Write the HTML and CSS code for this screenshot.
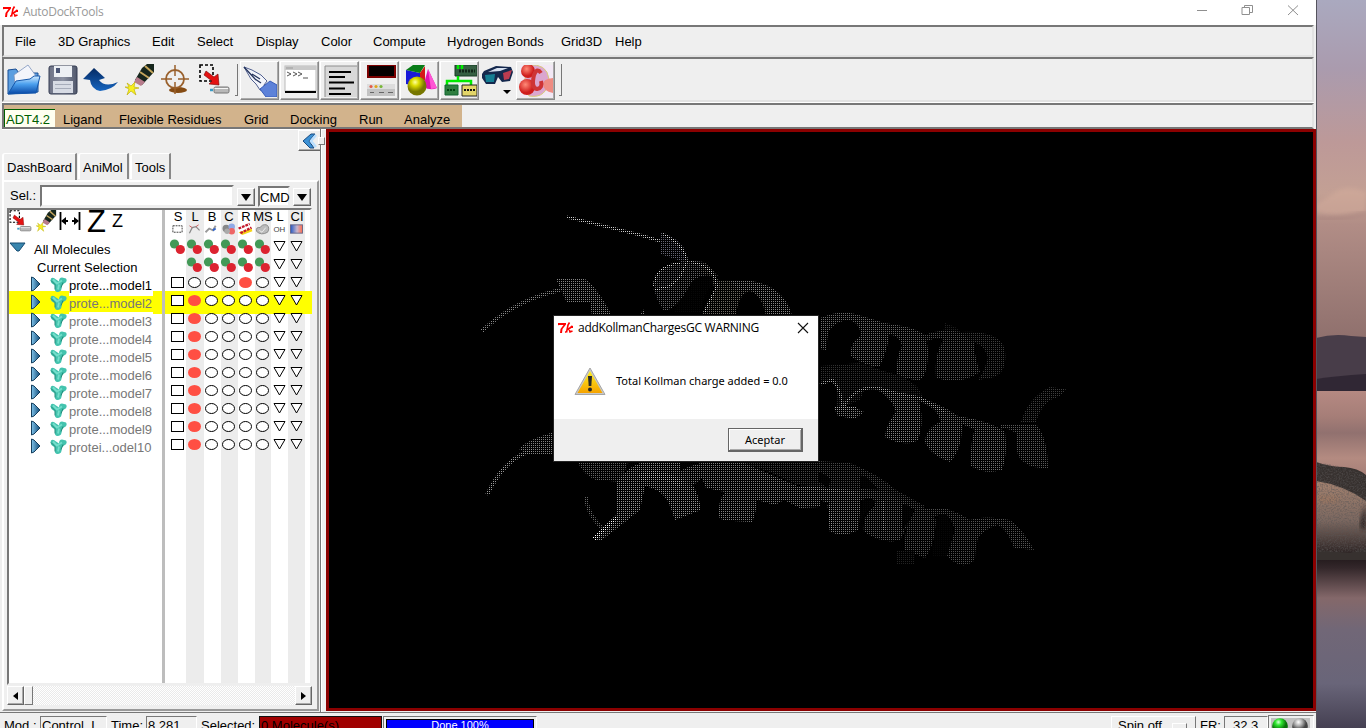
FILE: index.html
```html
<!DOCTYPE html>
<html lang="es">
<head>
<meta charset="utf-8">
<title>AutoDockTools</title>
<link rel="stylesheet" href="styles.css">
</head>
<body>
<svg class="defs" width="0" height="0">
  <defs>
    <linearGradient id="blue" x1="0" y1="0" x2="0" y2="1"><stop offset="0" stop-color="#d3ecff"/><stop offset=".45" stop-color="#4ba0ee"/><stop offset="1" stop-color="#0747a5"/></linearGradient>
    <linearGradient id="undo" x1="0" y1="0" x2="0" y2="1"><stop offset="0" stop-color="#052a62"/><stop offset="1" stop-color="#1665c0"/></linearGradient>
    <linearGradient id="metal"><stop offset="0" stop-color="#6d7285"/><stop offset=".5" stop-color="#8c92a3"/><stop offset="1" stop-color="#50576b"/></linearGradient>
    <linearGradient id="warn" x1="0" y1="0" x2="0" y2="1"><stop offset="0" stop-color="#ffef20"/><stop offset="1" stop-color="#f5a300"/></linearGradient>
    <linearGradient id="arrow"><stop offset="0" stop-color="#7fc3ea"/><stop offset="1" stop-color="#104a78"/></linearGradient>
    <radialGradient id="yball" cx=".4" cy=".3"><stop offset="0" stop-color="#ffffa0"/><stop offset=".4" stop-color="#dcdc00"/><stop offset="1" stop-color="#777700"/></radialGradient>
    <radialGradient id="gball" cx=".4" cy=".25"><stop offset="0" stop-color="#d8ffd8"/><stop offset=".4" stop-color="#30e830"/><stop offset="1" stop-color="#087008"/></radialGradient>
    <radialGradient id="sball" cx=".4" cy=".25"><stop offset="0" stop-color="#fff"/><stop offset=".5" stop-color="#aaa"/><stop offset="1" stop-color="#444"/></radialGradient>
    <radialGradient id="rball" cx=".4" cy=".35"><stop offset="0" stop-color="#ff8a78"/><stop offset="1" stop-color="#cf1c1c"/></radialGradient>
    <linearGradient id="cmap"><stop offset="0" stop-color="#2458c4"/><stop offset=".55" stop-color="#c9b6cc"/><stop offset="1" stop-color="#ff6a4a"/></linearGradient>
    <symbol id="tk" viewBox="0 0 15 12"><path d="M0 3.200V1H8V2.500L4.500 7L4 11H2L2.500 7L5.500 3H1.500Z" fill="#f00"/><path d="M11.500 .5L10 3L8.500 10.500M14.500 4L10 7.500M11 6.500L12 10L14.500 9M7 10H8M14.500 4V6" fill="none" stroke="#f00" stroke-width="1.600"/></symbol>
    <symbol id="eraser" viewBox="0 0 30 32"><path d="M17 4L22 0H29V8L17 21L10 16Z" fill="#16261d"/><path d="M20 2L28 9M15 8L24 14" stroke="#c4a55c" stroke-width="2"/><path d="M12 13L20 18L16 22L9 18Z" fill="#b87c8c"/><path d="M2 19L6 22L10 18L9 23L14 24L9 25L11 31L6 27L2 31L4 25L0 23L4 23Z" fill="#f7ef20" stroke="#b8a800" stroke-width=".6"/></symbol>
    <symbol id="picksel" viewBox="0 0 31 32"><path d="M1 1H14V17H1Z" fill="none" stroke="#000" stroke-width="1.600" stroke-dasharray="3 2"/><path d="M7 7L15 13L19 10L20 21L10 20L13 17L5 11Z" fill="#e41212" stroke="#700" stroke-width=".6"/><rect x="15" y="23" width="15" height="6" rx="1.500" fill="#b8b8b8" stroke="#777"/><path d="M15.500 24.500H29" stroke="#f5f5f5"/><path d="M11 26H14" stroke="#3c9cc4" stroke-width="2.500"/></symbol>
    <symbol id="mol" viewBox="0 0 17 16"><path d="M1 2Q3 0 6 3L9 5Q9 1 12 1L16 2Q18 5 14 7L12 9Q12 11 11 14Q7 17 5 14L5 9L2 7Q0 5 1 2Z" fill="#43c3ae"/><path d="M3 3L7 7L12 4M9 8L8 13" fill="none" stroke="#74decb" stroke-width="1.800"/><path d="M1 4L5 8L5 13M13 6L11 11" fill="none" stroke="#238878"/></symbol>
    <pattern id="mesh" width="2" height="2" patternUnits="userSpaceOnUse"><path d="M0 0H2V1H1V2H0Z" fill="#000" shape-rendering="crispEdges"/></pattern>
  </defs>
</svg>

<div class="desktop">
<main class="window">
  <header class="titlebar">
    <svg class="tk"><use href="#tk"/></svg><span class="apptitle">AutoDockTools</span>
    <svg class="winbtns" width="110" height="22" viewBox="0 0 110 22" fill="none" stroke="#8f8f8f"><path d="M1 10.500H11M46 7.500H53.500V14.500H46ZM48.500 7.500V5.500H56.500V12.500H54M92 5.500L102 15M102 5.500L92 15"/></svg>
  </header>

  <nav class="frame menubar">
    <span>File</span><span>3D Graphics</span><span>Edit</span><span>Select</span><span>Display</span><span>Color</span><span>Compute</span><span>Hydrogen Bonds</span><span>Grid3D</span><span>Help</span>
  </nav>

  <div class="frame toolbar">
    <svg class="i-open" viewBox="0 0 34 32"><path d="M1 6L9 5L12 9H31V28L1 30Z" fill="#5b9ee0" stroke="#1a4e93"/><path d="M7 11L21 1L29 12L28 19L8 20Z" fill="#f3f5fb" stroke="#7e94bd" stroke-width=".8"/><path d="M1 30L9 17L23 15L27 12H33L29 29Z" fill="url(#blue)" stroke="#1457ab"/></svg>
    <svg class="i-save" viewBox="0 0 30 32"><rect x="1" y="2" width="28" height="28" rx="2" fill="url(#metal)" stroke="#343c52"/><path d="M6 2H24V13H6Z" fill="#edf0f4"/><path d="M8 4H12V9H8Z" fill="#4a5574"/><path d="M5 17H25V29H5Z" fill="#d7dbe4"/><path d="M7 20.500H23M7 24.500H23" stroke="#a6acba"/></svg>
    <svg class="i-undo" viewBox="0 0 35 32"><path d="M0 15L11 4L22 14L16 16Q22 24 35 18Q29 26 17 27Q8 25 7 16Z" fill="url(#undo)"/></svg>
    <svg class="i-eraser"><use href="#eraser"/></svg>
    <svg class="i-target" viewBox="0 0 28 32"><ellipse cx="17" cy="26" rx="9" ry="3" fill="#854b13"/><circle cx="14" cy="15" r="9" fill="none" stroke="#99602c" stroke-width="1.800"/><path d="M14 1V12M14 18V30M0 15H11M17 15H28" stroke="#99602c" stroke-width="1.500"/></svg>
    <svg class="i-pick"><use href="#picksel"/></svg>
    <i class="sep"></i>
    <b class="tool"><svg viewBox="0 0 34 32"><path d="M1 2L9 5L18 10L24 16L21 20L22 26L17 25L13 19L8 14Z" fill="#f3f5fb" stroke="#516090"/><path d="M1 2L13 15M9 9L17 14M12 14L18 18" stroke="#26355d" stroke-width="1.300"/><path d="M17 24L27 16L34 20V32H23Z" fill="#5d82d9" stroke="#385dba"/></svg></b>
    <b class="tool"><svg viewBox="0 0 34 32"><rect x="2" y="1" width="31" height="25" fill="#fff" stroke="#b9b9b9"/><path d="M2 1H33V5H2Z" fill="#c9c9c9"/><path d="M3 3H10" stroke="#999"/><path d="M2 26H33V28H2Z" fill="#000"/><path d="M4 7L8 9L4 11M10 7L14 9L10 11M15 7L19 9L15 11M20 13H25" fill="none" stroke="#555"/></svg></b>
    <b class="tool"><svg viewBox="0 0 34 32"><path d="M2 1H34V32H2Z" fill="#d8d8d8"/><path d="M2 32V1H34" fill="none" stroke="#8e8e8e"/><path d="M6 7H28M6 12H22M6 17.500H31M6 23.500H22M6 29H28" stroke="#000" stroke-width="2"/></svg></b>
    <b class="tool"><svg viewBox="0 0 34 32"><rect x="5" y="0" width="27" height="12" fill="#050000" stroke="#7c0000" stroke-width="2"/><rect x="4" y="19" width="28" height="12" fill="#c3c3c3"/><path d="M4 19H32V24H4Z" fill="#ddd"/><circle cx="8" cy="21.500" r="1.600" fill="#e45a49"/><circle cx="13" cy="21.500" r="1.600" fill="#dfa51c"/><circle cx="18" cy="21.500" r="1.600" fill="#78b738"/><path d="M7 27.500H11M16 27.500H21M25 27.500H30" stroke="#666"/></svg></b>
    <b class="tool"><svg viewBox="0 0 34 32"><path d="M3 5L17 8V22L3 19Z" fill="#1818d8"/><path d="M3 5L10 0H22L17 8Z" fill="#087c18"/><path d="M17 8L22 1V15L17 22Z" fill="#d51818"/><path d="M25 4L34 23Q28 26 20 22Z" fill="#e014b0"/><path d="M25 4L28 24L34 23Z" fill="#ff55d4"/><circle cx="14" cy="21" r="9.500" fill="url(#yball)"/></svg></b>
    <b class="tool"><svg viewBox="0 0 34 32"><path d="M12 0H34V11H12Z" fill="#355f42" stroke="#173c23"/><path d="M16 6H32" stroke="#122619" stroke-width="3" stroke-dasharray="2 1"/><path d="M15 0V4M19 0V4M15 11V16H4V20M15 16H28V20" fill="none" stroke="#00ec00" stroke-width="2.500"/><path d="M2 20H15V30H2Z" fill="#2f7e40" stroke="#163"/><path d="M4 25H13" stroke="#041" stroke-width="2" stroke-dasharray="2 1"/><path d="M19 20H34V31H19Z" fill="#e3d568" stroke="#222"/><path d="M21 25H32" stroke="#111" stroke-width="2" stroke-dasharray="2 1"/></svg></b>
    <svg class="i-glasses" viewBox="0 0 35 32"><path d="M2 10L4 7L16 2L31 3L33 8L30 17L22 18L18 13L15 20L6 20L2 14Z" fill="#14284d"/><path d="M5 11L15 10L14 18L6 18Z" fill="#147e93"/><path d="M23 9L32 6L29 15L24 16Z" fill="#bb3b50"/><path d="M8 8L17 4L28 4L20 7Z" fill="#d6e0f0"/><path d="M23 26H31L27 30Z"/></svg>
    <b class="tool"><svg viewBox="0 0 34 32"><rect x="1" width="33" height="32" fill="#f2e8f5"/><path d="M9 0Q28 -2 30 14Q28 34 10 31Q2 18 9 0Z" fill="#dba6cf" stroke="#d8cc7a"/><circle cx="9" cy="6" r="7" fill="url(#rball)"/><circle cx="8" cy="22" r="8" fill="url(#rball)"/><path d="M34 13Q24 14 24 19Q24 26 34 28Z" fill="#ef8c82"/><path d="M22 8Q18 2 15 10Q12 23 18 24Q24 23 22 16" fill="none" stroke="#ce3435" stroke-width="4"/></svg></b>
    <i class="sep"></i>
  </div>

  <nav class="frame adtbar"><div class="adtmenu"><span class="adt">ADT4.2</span><span>Ligand</span><span>Flexible Residues</span><span>Grid</span><span>Docking</span><span>Run</span><span>Analyze</span></div></nav>

  <div class="workspace">
    <aside class="side">
      <button class="collapse" aria-label="Collapse"><svg width="18" height="16" viewBox="0 0 18 16"><path d="M9 1L1 8L8 15H12L7 8L13 1Z" fill="#3c91d5" stroke="#184b81"/><path d="M14 2L9 8L14 14" fill="none" stroke="#b9dfff" stroke-width="2.500"/></svg></button>
      <i class="sash"></i><i class="handle"></i>
      <div class="tabs"><span>DashBoard</span><span>AniMol</span><span>Tools</span></div>
      <section class="panel">
        <div class="selrow"><label>Sel.:</label><div class="entry"></div><button class="drop" aria-label="Open"><svg width="10" height="7"><path d="M0 0H10L5 7Z"/></svg></button><div class="cmd">CMD</div><button class="drop" aria-label="Open"><svg width="10" height="7"><path d="M0 0H10L5 7Z"/></svg></button></div>
        <div class="tree">
          <div class="treehead">
            <div class="treetools">
              <svg width="23" height="23"><use href="#picksel"/></svg><svg width="21" height="22"><use href="#eraser"/></svg>
              <svg width="22" height="20" viewBox="0 0 22 20"><path d="M1.500 1V19M20.500 1V19M3 10H9M13 10H19" stroke="#000" stroke-width="1.800"/><path d="M2 10L7 6V14ZM20 10L15 6V14Z"/></svg>
              <span class="bigz">Z</span><span class="smallz">Z</span>
            </div>
            <div class="cols" id="heads"></div>
          </div>
          <div id="rows"></div>
        </div>
        <div class="scroll"><button aria-label="Left"><svg width="5" height="8"><path d="M5 0V8L0 4Z"/></svg></button><i></i><b></b><button aria-label="Right"><svg width="5" height="8"><path d="M0 0V8L5 4Z"/></svg></button></div>
      </section>
    </aside>

    <section class="viewer">
      <svg width="984" height="576" viewBox="329 132 984 576">
        <g fill="#484848">
          <path d="M820 366L860 363Q880 370 900 376Q920 385 922 396L890 396L866 386L860 400L836 410Q840 390 832 378L820 382Z" fill="#323232"/>
          <path d="M735 461H820L850 463Q880 475 896 490L925 506H910L880 490L860 476V490L830 488L820 488L795 484L770 472Z"/>
          <path d="M945 323L955 327L962 333H943Z" fill="#222"/>
        </g>
        <g fill="#808080">
          <path d="M660 233H664Q676 238 683 246L688 258L683 264L678 260L660 254Z" fill="#656573"/>
          <path d="M654 288Q655 266 676 263L690 260L704 262L718 276L704 278Q694 278 688 290Q675 310 664 311Q656 300 654 288Z" fill="#646467"/>
          <path d="M704 262Q714 268 718 280L730 281Q750 278 770 290Q785 300 792 316H766Q762 295 750 291Q738 294 736 316H702Q706 300 716 291L710 278L700 271Z" fill="#6c6963"/>
          <path d="M730 281Q755 278 772 288Q788 298 792 316H768Q766 298 753 291L738 290Z" fill="#858585"/>
          <path d="M556 279H585Q598 288 612 316H592L590 303H567Z" fill="#838383"/><path d="M640 316L643 309L646 316Z"/>
          <path d="M820 318Q842 308 862 316L888 324Q892 340 880 366Q868 368 850 356Q850 342 861 336Q860 322 848 320Q832 322 828 334L826 350L820 349Z" fill="#6d6d6d"/>
          <path d="M882 323Q915 326 926 336L928 350Q928 375 920 380Q905 380 897 374Q896 356 902 346Q898 332 886 336L882 334Z" fill="#666"/>
          <path d="M922 336Q940 328 960 332L975 336Q972 350 980 372Q960 386 936 378Q934 352 944 340Q936 336 926 342Z" fill="#555"/>
          <path d="M960 332Q1000 330 1005 350Q1008 375 990 378L978 380Q984 372 988 358Q984 344 972 342Z" fill="#3e3e3e"/>
          <path d="M834 408H856L864 412L855 419L838 416Z"/>
          <path d="M878 390Q910 390 920 404Q924 425 918 440Q905 448 885 437Q886 424 896 412Q892 398 878 390"/>
          <path d="M915 397Q935 400 958 416L962 425Q962 450 950 462Q930 455 925 442Q926 428 940 422Q940 408 915 400" fill="#747474"/>
          <path d="M950 415Q990 420 1005 432Q1008 455 1002 470Q985 475 971 466Q970 440 975 430Q965 424 950 422" fill="#6e6e6e"/>
          <path d="M1000 424H1036Q1048 438 1048 469L1034 467Q1018 462 1017 450V434Q1010 428 1000 428Z" fill="#5a5a5a"/>
          <path d="M1021 422Q1028 398 1050 387L1066 389Q1062 397 1050 400Q1040 408 1036 422Z" fill="#3e3e3e"/>
          <path d="M519 449Q526 440 554 432V455H534L524 452Z"/><path d="M577 461H628L622 482L596 480Q584 476 577 461Z" fill="#656565"/>
          <path d="M616 482Q632 462 650 461H680V470Q698 485 701 510L675 520L670 506Q664 490 645 486L640 510L620 526L602 540H594L600 532L616 518Z" fill="#929292"/>
          <path d="M680 471Q698 461 720 461H740Q760 470 800 487H820V507L800 508L784 500L775 505L757 500Q756 515 752 522L733 521Q718 521 719 515Q718 500 725 492L706 488L702 478L690 488Z" fill="#808080"/>
          <path d="M810 487L861 490Q860 520 858 530Q845 538 830 532Q826 520 830 504L820 500Z" fill="#7a7a7a"/>
          <path d="M861 489L885 490L905 502Q915 515 900 540Q885 545 864 532Q862 515 875 506Q876 500 861 500Z" fill="#606060"/>
          <path d="M880 490L905 500L925 508L936 520Q935 545 925 558L905 550Q904 530 910 520L915 510Z" fill="#535353"/>
          <path d="M897 550H915V564H897Z" fill="#222"/>
          <path d="M925 508H945L960 514L970 520L982 524Q975 545 975 560Q962 572 947 556Q952 540 955 530Q950 515 945 514L925 518Z" fill="#505050"/>
          <path d="M970 520Q985 515 1010 520Q1024 530 1034 550L1014 548Q1008 530 998 525Q985 528 976 540Z" fill="#545454"/>
        </g>
        <g fill="#080808">
          <path d="M862 500Q872 496 876 502Q870 508 864 514L861 520Z"/>
          <path d="M903 505Q912 504 912 514Q908 522 903 530Z"/>
          <path d="M818 472Q826 474 831 480L828 488L818 481ZM860 475L868 478L878 489H862Z"/>
          <path d="M707 292Q716 279 712 276Q700 274 692 282Q682 298 674 312H701Q702 300 707 292Z"/>
          <path d="M937 519Q940 512 947 516L954 532L946 556H932Z"/>
        </g>
        <g fill="none" stroke="#ccc" stroke-width="3">
          <path d="M567 217L600 225L640 235L660 241"/><path d="M663 234Q685 245 687 262L680 277L670 286L654 290M654 286Q655 266 680 263M690 262Q714 265 717 286L704 313" stroke="#ddd" stroke-width="2"/>
          <path d="M482 331Q515 300 560 290" stroke="#888" stroke-width="4"/><path d="M487 495Q505 457 532 451" stroke="#999" stroke-width="4"/>
          <path d="M820 384L832 380Q840 386 843 408Q855 385 878 388L895 393L920 398L945 412M834 408H856" stroke="#aaa"/>
          <path d="M586 496Q586 512 602 528" stroke="#666" stroke-width="4"/><path d="M594 539L617 517" stroke="#fff" stroke-width="4"/>
          <path d="M800 487L855 493M883 500L884 530M829 505L832 530" stroke="#999"/>
          <path d="M640 478Q655 470 682 484" stroke="#bbb" stroke-width="8"/>
        </g>
        <rect x="329" y="132" width="984" height="576" fill="url(#mesh)"/>
      </svg>
      <div class="dialog" role="dialog">
        <div class="dlgtitle"><svg class="tk"><use href="#tk"/></svg><span>addKollmanChargesGC WARNING</span><svg width="12" height="12" viewBox="0 0 12 12"><path d="M1 1L11 11M11 1L1 11" stroke="#111" stroke-width="1.100"/></svg></div>
        <div class="dlgbody"><svg width="32" height="29" viewBox="0 0 32 29"><path d="M16 1L31 27.500H1Z" fill="#c9c9c9" stroke="#a6a6a6" stroke-linejoin="round"/><path d="M16 4L28.500 26H3.500Z" fill="url(#warn)"/><path d="M14 9H18L17.300 19H14.700Z" fill="#282828"/><circle cx="16" cy="22.500" r="2" fill="#282828"/></svg><span>Total Kollman charge added = 0.0</span></div>
        <div class="dlgfoot"><button>Aceptar</button></div>
      </div>
    </section>
  </div>

  <footer class="status">
    <span>Mod.:</span><div class="field">Control_L</div><span>Time:</span><div class="field">8.281</div><span>Selected:</span><div class="field red">0 Molecule(s)</div><div class="progress"><p>Done 100%</p></div>
    <div class="spin">Spin off<i></i></div><span class="fr">FR:</span><div class="field rate">32.3</div>
    <div class="lights"><svg width="41" height="20" viewBox="0 0 41 20"><path d="M0 0H39V20H0Z" fill="#c1c1c1"/><circle cx="9" cy="8" r="7.800" fill="url(#gball)"/><circle cx="29" cy="8" r="7.800" fill="url(#sball)"/></svg></div>
  </footer>
</main>

<svg class="wallpaper" width="50" height="728" viewBox="0 0 50 728">
  <defs>
    <linearGradient id="sky" x1="0" y1="0" x2="0" y2="1"><stop offset="0" stop-color="#aaa9bf"/><stop offset=".2" stop-color="#aa9bae"/><stop offset=".42" stop-color="#bd9998"/><stop offset=".57" stop-color="#c3a094"/><stop offset=".66" stop-color="#b18d86"/><stop offset="1" stop-color="#8f706d"/></linearGradient>
    <linearGradient id="water" x1="0" y1="0" x2="0" y2="1"><stop offset="0" stop-color="#b58982"/><stop offset=".3" stop-color="#a67e78"/><stop offset=".5" stop-color="#91716f"/><stop offset=".8" stop-color="#b48b81"/><stop offset="1" stop-color="#a68078"/></linearGradient>
    <linearGradient id="shore" x1="0" y1="0" x2="0" y2="1"><stop offset="0" stop-color="#171012"/><stop offset=".1" stop-color="#33272a"/><stop offset=".27" stop-color="#84686a"/><stop offset=".45" stop-color="#716777"/><stop offset=".75" stop-color="#696579"/><stop offset="1" stop-color="#454052"/></linearGradient>
    <linearGradient id="stone" x1="0" y1="0" x2="0" y2="1"><stop offset="0" stop-color="#a4826f"/><stop offset=".55" stop-color="#7c6860"/><stop offset="1" stop-color="#2e2525"/></linearGradient>
    <filter id="soft"><feGaussianBlur stdDeviation="2"/></filter>
    <filter id="grain" x="0" y="0" width="1" height="1"><feTurbulence type="fractalNoise" baseFrequency=".65" numOctaves="2"/><feColorMatrix values="0 0 0 0 .1 0 0 0 0 .09 0 0 0 0 .09 1.500 0 0 0 -.6"/><feComposite in2="SourceGraphic" operator="in"/></filter>
  </defs>
  <path d="M0 0H50V340H0Z" fill="url(#sky)"/><path d="M0 204Q12 197 23 190Q32 185 50 192V212Q20 218 0 212Z" fill="#d2ab9b" opacity=".6" filter="url(#soft)"/><path d="M0 219Q25 220 50 212" fill="none" stroke="#9f7b77" stroke-width="4" opacity=".35" filter="url(#soft)"/>
  <path d="M0 338Q18 333 35 336L50 337V391H0Z" fill="#483d49"/><path d="M0 379Q20 376 50 374V391H0Z" fill="#302734"/>
  <path d="M0 391H50V475H0Z" fill="url(#water)"/><path d="M0 550H50V728H0Z" fill="url(#shore)"/>
  <path d="M0 462Q15 467 28 467Q42 468 50 475V560H0Z" fill="#37312f"/><path d="M0 481Q28 485 50 501V548L34 553L0 550Z" fill="url(#stone)"/><path d="M50 505Q43 520 44 528L50 530Z" fill="#2c2220" filter="url(#soft)"/><ellipse cx="8" cy="499" rx="16" ry="4" fill="#b7794e" opacity=".2" filter="url(#soft)"/><path d="M0 462L28 467L50 475V552H0Z" filter="url(#grain)"/><path d="M.5 0V728" stroke="#55535d"/>
</svg>
</div>
<script src="script.js"></script>
</body>
</html>
```
FILE: styles.css
```css
*{box-sizing:border-box}
body{margin:0;width:1366px;height:728px;overflow:hidden;background:#efefef;color:#000;font:13px/16px "Liberation Sans",Arial,sans-serif}
button{font:inherit;padding:0;border:1px solid;border-color:#fff #666 #666 #fff;background:#efefef;color:#000;box-shadow:inset -1px -1px #aaa}
i,b{font-style:normal;font-weight:normal}
svg{display:block;flex:none}
.defs{position:absolute}
.desktop{display:flex}
.window{width:1316px;height:728px;display:flex;flex-direction:column;overflow:hidden;background:#efefef}
.titlebar{height:25px;display:flex;background:#fff;padding:4px 5px 0 3px;flex:none}
.tk{width:15px;height:12px;margin-top:2px}
.apptitle{font:12px/16px "Open Sans","Noto Sans",sans-serif;color:#999;margin-left:5px;letter-spacing:-.3px}
.winbtns{margin:-4px 5px 0 auto}
.frame{margin:0 2px;border:solid;border-width:2px;border-color:#777 #e2e2e2 #e2e2e2 #777;box-shadow:0 1px #fff;flex:none}
.menubar{height:32px;display:grid;grid-template-columns:43px 94px 45px 59px 65px 52px 74px 114px 54px 60px;padding:7px 0 0 11px;white-space:nowrap}
.toolbar{height:45px;margin-top:0;display:grid;grid-template-columns:41px 35px 42px 36px 38px 38px 3px repeat(6,40px) 36px 40px 6px;padding:1px 0 0 3px;align-items:center}
.toolbar>svg{height:32px}
.i-open{width:34px}.i-save{width:30px}.i-undo{width:35px}.i-eraser{width:30px}.i-target{width:28px}.i-pick{width:31px}.i-glasses{width:35px}
.sep{height:32px;border-right:1px solid #777;border-bottom:1px solid #777;width:3px;margin-left:-2px}
.sep:last-child{margin-left:3px}
.tool{height:39px;border:1px solid;border-color:#fff #888 #888 #fff;box-shadow:inset -1px -1px #aaa;padding:3px 2px;margin-right:1px}
.tool svg{width:34px;height:32px}
.adtbar{height:26px;margin-top:1px;border-bottom-color:#777;background:#efefef}
.adtmenu{width:458px;height:22px;background:#d2b38c;display:grid;grid-template-columns:59px 56px 125px 46px 69px 45px 58px;line-height:29px;white-space:nowrap;overflow:hidden}
.adt{width:51px;height:18px;margin-top:4px;border-left:1px solid;border-top:1px solid;background:#fffff0;color:#006000;line-height:20px;padding-left:1px}
.workspace{display:flex;height:583px;flex:none}
.side{width:326px;height:583px;position:relative;display:flex;flex-direction:column}
.collapse{width:24px;height:21px;margin:1px 0 2px 298px;flex:none;padding-left:3px}
.sash{position:absolute;left:320px;top:0;width:2px;height:583px;border-left:1px solid #777;background:#fff;z-index:1}
.handle{position:absolute;left:318px;top:8px;width:7px;height:8px;background:#efefef;border:1px solid;border-color:#fff #777 #777 #fff;z-index:2}
.tabs{display:flex;height:27px;padding-left:2px;flex:none;line-height:27px}
.tabs span{border-left:2px solid #fff;border-top:1px solid #fff;border-right:2px solid #888;margin-right:1px;border-radius:3px 0 0;padding-left:3px;height:26px}
.tabs span:nth-child(1){width:75px;height:28px}.tabs span:nth-child(2){width:51px}.tabs span:nth-child(3){width:41px}
.panel{width:317px;margin-left:2px;height:531px;border:2px solid;border-color:#fff #999 #999 #fff;display:flex;flex-direction:column;padding:2px 3px 0}
.selrow{height:24px;display:flex;align-items:center;flex:none}
.selrow label{width:33px;padding-left:3px;white-space:nowrap}
.entry{width:194px;height:22px;background:#fff;border:2px solid;border-color:#777 #eee #eee #777}
.drop{width:18px;height:18px;margin:2px 3px 0;display:grid;place-items:center;flex:none}
.cmd{width:32px;height:21px;background:#fff;border:2px solid;border-color:#777 #eee #eee #777;line-height:19px}
.tree{width:305px;height:477px;flex:none;background:linear-gradient(90deg,transparent 153px,#bdbdbd 153px 156px,transparent 156px 177px,#ececec 177px 195px,transparent 195px 212px,#ececec 212px 229px,transparent 229px 246px,#ececec 246px 262px,transparent 262px 279px,#ececec 279px 296px,transparent 296px),#fff;border:2px solid;border-color:#777 #eee #eee #777}
.treehead{height:30px;display:grid;grid-template-columns:160px 136px}
.treetools{display:flex;align-items:flex-start;gap:4px;padding:0}
.bigz{font-size:31px;line-height:23px;margin-left:2px;width:20px}.smallz{font-size:18px;line-height:22px;margin-left:1px}
.treetools>svg:nth-child(3){margin:1px 0 0 -2px}
.cols{display:grid;grid-template-columns:repeat(8,17px)}
.cols svg{width:17px;height:13px;overflow:visible}
.hd{text-align:center;line-height:15px;display:flex;flex-direction:column;align-items:center;white-space:nowrap;width:17px}
.hd span{margin:-1px -3px 0 -2px}
.hd svg{height:12px;margin-top:-1px}
.row{height:18px;display:grid;grid-template-columns:20px 19px 21px 84px 16px 136px;position:relative;z-index:1}
.row.group{grid-template-columns:25px 135px 136px}
.row.sub{grid-template-columns:28px 132px 136px}
.row .label{height:20px;line-height:20px;color:#777;background:#fff;white-space:nowrap}
.row.group .label,.row.sub .label,.row.first .label{color:#000}
.row.group .label,.row.sub .label{background:none}
.row.hot{z-index:0}.row.hot .label{background:#ff0}
.row.hot:before{content:"";position:absolute;z-index:-1;left:0;top:-3px;height:23px;width:303px;background:linear-gradient(90deg,#ff0 153px,#bdbdbd 153px 156px,#ff0 156px)}
.twist{grid-column:2;width:14px;height:16px}.molicon{width:17px;height:17px;margin-left:2px}
.row .cols{grid-column:6}.group .cols,.sub .cols{grid-column:3}
.scroll{display:flex;height:19px;width:305px;margin-top:1px;flex:none;background:repeating-conic-gradient(#fff 0 25%,#eaeaea 0 50%) 0 0/2px 2px}
.scroll button{width:17px;display:grid;place-items:center}.scroll i{width:9px;border:1px solid;border-color:#fff #777 #777 #fff;background:#efefef}.scroll b{flex:1}
.viewer{position:relative;width:990px;height:582px;border:3px solid #8b0000;background:#000}
.dialog{position:absolute;left:225px;top:184px;width:264px;height:145px;background:#fff;outline:1px solid #242424;display:flex;flex-direction:column;font:11px/16px "Noto Sans","Open Sans",sans-serif}
.dlgtitle{height:25px;display:flex;align-items:center;padding:0 9px 2px 4px;font-family:"Open Sans",sans-serif;font-size:12px}
.dlgtitle .tk{margin-top:1px}
.dlgtitle span{margin-left:5px;width:200px;white-space:nowrap;letter-spacing:-.27px}.dlgtitle>svg:last-child{margin-left:auto}
.dlgbody{height:78px;display:flex;align-items:center;padding:2px 0 0 20px;gap:10px;white-space:nowrap}
.dlgfoot{height:42px;background:#efefef;display:flex;justify-content:flex-end;padding:9px 15px}
.dlgfoot button{width:75px;height:24px;border:1px solid #666;border-width:1px 2px 2px 1px;box-shadow:inset 1px 1px #fff,inset -1px -1px #aaa}
.status{height:16px;border-top:1px solid #777;margin-top:0;position:relative;display:flex;padding-left:4px;line-height:19px;white-space:nowrap;overflow:hidden;flex:none}
.status>span{padding-top:3px}.status>span:nth-of-type(1){width:36px}.status>span:nth-of-type(2){width:35px}.status>span:nth-of-type(3){width:58px}
.field{height:20px;margin-top:3px;width:67px;margin-right:4px;border:1px solid;border-color:#777 #fff #fff #777;padding-left:1px;flex:none;line-height:18px}
.status .field:nth-of-type(2){width:51px}.status .field.red{width:123px;background:#a00000;border-color:#111;margin-right:1px}
.progress{width:154px;height:20px;margin-top:3px;border:1px solid #777;border-right-color:#fff;padding:2px;flex:none}
.progress p{margin:0;background:#00f;border:1px solid #000;color:#fff;font-size:11px;line-height:11px;height:18px;text-align:center}
.spin{margin-left:574px;width:85px;height:20px;margin-top:3px;border:1px solid;border-color:#fff #777 #777 #fff;padding-left:6px;display:flex;flex:none;line-height:18px}
.spin i{width:15px;height:6px;border:1px solid;border-color:#fff #777 #777 #fff;margin:6px 0 0 10px}
.status>.fr{padding-left:4px;width:28px}.status .rate{width:44px;padding-left:8px;margin-right:0}
.lights{width:46px;height:20px;margin-top:2px;border:1px solid;border-color:#777 #fff #fff #777;padding:2px;flex:none}
.wallpaper{width:50px;height:728px}
```
FILE: script.js
```javascript
const shapes = {
  box: '<rect x="2.500" y="1.500" width="12" height="10" fill="#fff" stroke="#000"/>',
  off: '<ellipse cx="8.500" cy="6.500" rx="6" ry="5" fill="#fff" stroke="#000"/>',
  on: '<ellipse cx="8.500" cy="6.500" rx="6.500" ry="5.500" fill="#ff4f43"/>',
  tri: '<path d="M3 1.500H14L8.500 11Z" fill="#fff" stroke="#000"/>',
  duo: '<circle cx="5.500" cy="4" r="4.600" fill="#439957"/><circle cx="11.300" cy="9.500" r="4.600" fill="#dc2430"/>',
  none: ''
};
const svg = s => `<svg viewBox="0 0 17 13">${s}</svg>`;
const cells = list => `<div class="cols">${list.map(k => svg(shapes[k])).join('')}</div>`;

const heads = [
  ['S', '<rect x="3.500" y="3" width="10" height="7" fill="none" stroke="#333" stroke-dasharray="2 1"/>'],
  ['L', '<path d="M3 11L6 5L10 4L14 8" fill="none" stroke="#888" stroke-width="1.300"/><path d="M3 3L6 5M10 4L13 2" stroke="#c55"/>'],
  ['B', '<path d="M2 10L6 6L10 8L13 3" fill="none" stroke="#999" stroke-width="2"/><path d="M10 8L13 6" stroke="#36c" stroke-width="2"/>'],
  ['C', '<circle cx="6" cy="6" r="4" fill="#888"/><circle cx="12" cy="4" r="3.500" fill="#8fa9e7"/><circle cx="12" cy="9" r="3.500" fill="#e66"/><circle cx="7" cy="9" r="3" fill="#aaa"/>'],
  ['R', '<path d="M1 10L15 6L16 9L5 13Z" fill="#f6d518"/><path d="M1 6L13 1M3 11L15 5" stroke="#c2182c" stroke-width="2.500" stroke-dasharray="3 1"/>'],
  ['MS', '<path d="M2 9Q1 4 6 5Q8 1 13 2Q17 5 14 10Q7 14 2 9Z" fill="#bbb" stroke="#888"/><path d="M5 8L8 10L12 5" fill="none" stroke="#eee"/>'],
  ['L', '<text x="2" y="9.500" font-size="8.500" fill="#444">OH</text>'],
  ['CI', '<rect x="2" y="2" width="13" height="9" fill="url(#cmap)" stroke="#668"/>']
];
document.getElementById('heads').innerHTML = heads.map(([t, s]) => `<div class="hd"><span>${t}</span>${svg(s)}</div>`).join('');

const duo = ['duo', 'duo', 'duo', 'duo', 'duo'];
let html = `<div class="row group"><svg width="18" height="14" viewBox="0 0 18 14"><path d="M1 3H16L10 11H8Z" fill="#3986ae" stroke="#164c73"/></svg><span class="label">All Molecules</span>${cells(['duo', ...duo, 'tri', 'tri'])}</div>
<div class="row sub"><i></i><span class="label">Current Selection</span>${cells(['none', ...duo, 'tri', 'tri'])}</div>`;
for (let n = 1; n <= 10; n++) {
  const name = n < 10 ? 'prote...model' + n : 'protei...odel10';
  const state = n === 1 ? ['off', 'off', 'off', 'on', 'off'] : ['on', 'off', 'off', 'off', 'off'];
  html += `<div class="row ${n === 1 ? 'first' : n === 2 ? 'hot' : ''}"><svg class="twist" viewBox="0 0 14 16"><path d="M2.500 1V15L5 14L11 8L5 2Z" fill="url(#arrow)" stroke="#153f5e"/></svg><svg class="molicon"><use href="#mol"/></svg><span class="label">${name}</span>${cells(['box', ...state, 'tri', 'tri'])}</div>`;
}
document.getElementById('rows').innerHTML = html;
```
